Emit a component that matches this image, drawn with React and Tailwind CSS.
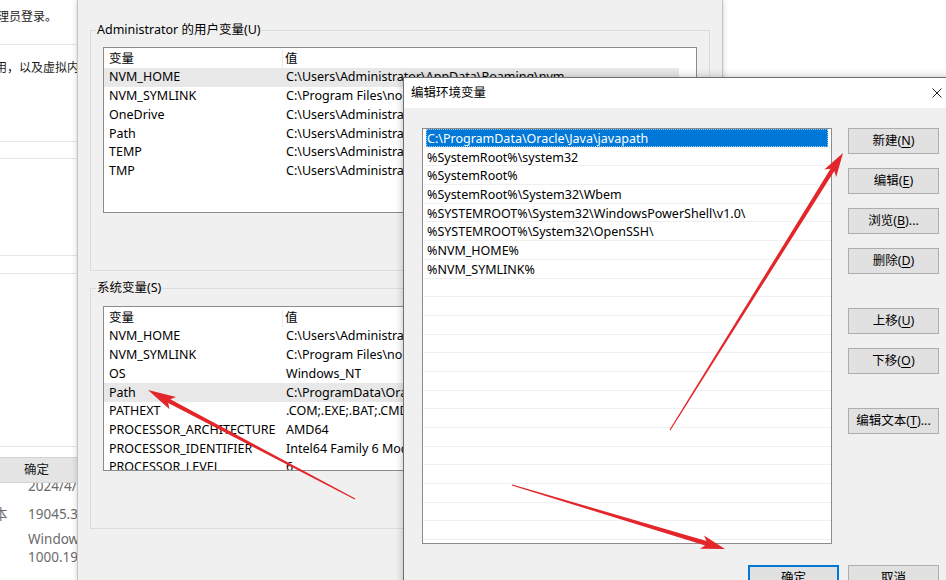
import React from 'react'

const userVars = [
  ["NVM_HOME", "C:\\Users\\Administrator\\AppData\\Roaming\\nvm"],
  ["NVM_SYMLINK", "C:\\Program Files\\nodejs"],
  ["OneDrive", "C:\\Users\\Administrator\\OneDrive"],
  ["Path", "C:\\Users\\Administrator\\AppData\\Local\\Microsoft\\WindowsApps"],
  ["TEMP", "C:\\Users\\Administrator\\AppData\\Local\\Temp"],
  ["TMP", "C:\\Users\\Administrator\\AppData\\Local\\Temp"],
]

const sysVars = [
  ["NVM_HOME", "C:\\Users\\Administrator\\AppData\\Roaming\\nvm"],
  ["NVM_SYMLINK", "C:\\Program Files\\nodejs"],
  ["OS", "Windows_NT"],
  ["Path", "C:\\ProgramData\\Oracle\\Java\\javapath;%SystemRoot%"],
  ["PATHEXT", ".COM;.EXE;.BAT;.CMD;.VBS;.VBE;.JS;.JSE;.WSF"],
  ["PROCESSOR_ARCHITECTURE", "AMD64"],
  ["PROCESSOR_IDENTIFIER", "Intel64 Family 6 Model 158 Stepping 10"],
  ["PROCESSOR_LEVEL", "6"],
]

const paths = [
  "C:\\ProgramData\\Oracle\\Java\\javapath",
  "%SystemRoot%\\system32",
  "%SystemRoot%",
  "%SystemRoot%\\System32\\Wbem",
  "%SYSTEMROOT%\\System32\\WindowsPowerShell\\v1.0\\",
  "%SYSTEMROOT%\\System32\\OpenSSH\\",
  "%NVM_HOME%",
  "%NVM_SYMLINK%",
]

function VarList({ rows, selected, className }) {
  return (
    <div className={"mx-[12px] border border-[#8c8c8c] bg-white overflow-hidden " + className}>
      <div className="flex h-[20px] items-center w-[575px] pt-[2px]">
        <div className="w-[179px] pl-[5px] h-full flex items-center border-r border-[#e8e8e8]">变量</div>
        <div className="pl-[2px]">值</div>
      </div>
      {rows.map((r, i) => (
        <div
          key={i}
          className={
            "flex h-[18.7px] items-center w-[575px] whitespace-nowrap pt-[1px] " +
            (i === selected ? "bg-[#e8e8e8]" : "")
          }
        >
          <div className="w-[179px] pl-[5px] overflow-hidden">{r[0]}</div>
          <div className="pl-[3px] overflow-hidden">{r[1]}</div>
        </div>
      ))}
    </div>
  )
}

function Btn({ children, primary }) {
  return (
    <div
      className={
        "h-[26px] w-[91px] flex items-center justify-center bg-[#e1e1e1] " +
        (primary ? "border-2 border-[#0078d7]" : "border border-[#adadad]")
      }
    >
      {children}
    </div>
  )
}

function Arrow({ x1, y1, x2, y2, head = 24, hw = 7 }) {
  const dx = x2 - x1
  const dy = y2 - y1
  const L = Math.hypot(dx, dy)
  const ux = dx / L
  const uy = dy / L
  const nx = -uy
  const ny = ux
  const bx = x2 - ux * head
  const by = y2 - uy * head
  const nbx = x2 - ux * (head - 4)
  const nby = y2 - uy * (head - 4)
  const p = (x, y) => `${x.toFixed(1)},${y.toFixed(1)}`
  const pts = [
    p(x1 + nx * 0.6, y1 + ny * 0.6),
    p(nbx + nx * 2.2, nby + ny * 2.2),
    p(bx + nx * hw, by + ny * hw),
    p(x2, y2),
    p(bx - nx * hw, by - ny * hw),
    p(nbx - nx * 2.2, nby - ny * 2.2),
    p(x1 - nx * 0.6, y1 - ny * 0.6),
  ].join(" ")
  return <polygon points={pts} fill="#e3262a" />
}

export default function App() {
  const rows = [...paths, ...Array(16).fill("")]
  return (
    <div className="relative w-[946px] h-[580px] overflow-hidden bg-white text-[12.5px] text-black font-['Noto_Sans','Noto_Sans_CJK_SC',sans-serif]">
      {/* background system window */}
      <div className="absolute left-0 top-0 w-[200px] h-full bg-white text-[#1a1a1a]">
        <div className="h-[45px] border-b border-[#e6e6e6] pt-[8px] leading-[18px] text-[12px] -ml-[3px]">理员登录。</div>
        <div className="h-[97px] border-b border-[#e6e6e6] pt-[14px] leading-[18px] text-[12px] -ml-[5px]">用，以及虚拟内存设置</div>
        <div className="h-[17px] border-b border-[#e6e6e6]"></div>
        <div className="h-[97px] border-b border-[#e6e6e6]"></div>
        <div className="h-[18px] border-b border-[#e6e6e6]"></div>
        <div className="h-[173px] border-b border-[#e6e6e6]"></div>
        <div className="h-[10px]"></div>
        <div className="h-[26px] bg-[#e5e5e5] border-y border-[#d4d4d4] flex items-center pl-[24px]">确定</div>
        <div className="text-[#6b6b6b] text-[13.5px]">
          <div className="h-[14px] overflow-hidden">
            <div className="pl-[28px] leading-[18px] -mt-[6px]">2024/4/12</div>
          </div>
          <div className="flex leading-[18px] mt-[8px]">
            <span className="-ml-[6px] w-[34px]">本</span>
            <span>19045.3803</span>
          </div>
          <div className="pl-[28px] leading-[18px] mt-[7px]">Windows Feature</div>
          <div className="pl-[28px] leading-[18px]">1000.19041</div>
        </div>
      </div>

      {/* environment variables dialog */}
      <div className="absolute left-[77px] top-0 w-[646px] h-[580px] bg-[#f0f0f0] border-x border-[#c4c4c4] shadow-[0_0_6px_rgba(0,0,0,0.18)] pt-[21px] px-[12px]">
        <fieldset className="h-[250px] border border-[#dcdcdc]">
          <legend className="ml-[5px] px-[1px] leading-[18px]">Administrator 的用户变量(U)</legend>
          <VarList rows={userVars} selected={0} className="mt-[8px] h-[166px]" />
        </fieldset>
        <fieldset className="h-[250px] mt-[8px] border border-[#dcdcdc]">
          <legend className="ml-[5px] px-[1px] leading-[18px]">系统变量(S)</legend>
          <VarList rows={sysVars} selected={3} className="mt-[9px] h-[165px]" />
        </fieldset>
      </div>

      {/* edit environment variable dialog */}
      <div className="absolute left-[403px] top-[77px] w-[548px] h-[520px] bg-[#f0f0f0] border border-[#707070] shadow-[0_0_8px_rgba(0,0,0,0.25)]">
        <div className="h-[30px] bg-white flex items-center justify-between pl-[7px] pr-[8px]">
          <span>编辑环境变量</span>
          <svg width="10" height="10" viewBox="0 0 10 10">
            <path d="M0.5 0.5 L9.5 9.5 M9.5 0.5 L0.5 9.5" stroke="#222" strokeWidth="1" />
          </svg>
        </div>
        <div className="flex pl-[18px] pt-[20px]">
          <div className="w-[410px] h-[416px] border border-[#8c8c8c] bg-white overflow-hidden">
            {rows.map((t, i) => (
              <div key={i} className="h-[18.7px] border-b border-[#f0f0f0] px-[3px]">
                <div
                  className={
                    "h-full flex items-center px-[1px] pt-[3px] whitespace-nowrap " +
                    (i === 0 ? "bg-[#0078d7] text-white outline-1 outline-dotted outline-[#9cc8f0] -outline-offset-1" : "")
                  }
                >
                  {t}
                </div>
              </div>
            ))}
          </div>
          <div className="ml-[16px] flex flex-col">
            <Btn>新建(<span className="underline underline-offset-2">N</span>)</Btn>
            <div className="mt-[14px]"><Btn>编辑(<span className="underline underline-offset-2">E</span>)</Btn></div>
            <div className="mt-[14px]"><Btn>浏览(<span className="underline underline-offset-2">B</span>)...</Btn></div>
            <div className="mt-[14px]"><Btn>删除(<span className="underline underline-offset-2">D</span>)</Btn></div>
            <div className="mt-[34px]"><Btn>上移(<span className="underline underline-offset-2">U</span>)</Btn></div>
            <div className="mt-[14px]"><Btn>下移(<span className="underline underline-offset-2">O</span>)</Btn></div>
            <div className="mt-[34px]"><Btn>编辑文本(<span className="underline underline-offset-2">T</span>)...</Btn></div>
          </div>
        </div>
        <div className="flex justify-end gap-[9px] pr-[11px] mt-[21px]">
          <Btn primary>确定</Btn>
          <Btn>取消</Btn>
        </div>
      </div>

      {/* red annotation arrows */}
      <svg className="absolute inset-0 pointer-events-none" width="946" height="580">
        <Arrow x1={355} y1={499} x2={148} y2={390} head={28} hw={7} />
        <Arrow x1={670} y1={430} x2={843} y2={153} head={24} hw={7} />
        <Arrow x1={512} y1={485} x2={725} y2={549} head={24} hw={7} />
      </svg>
    </div>
  )
}
